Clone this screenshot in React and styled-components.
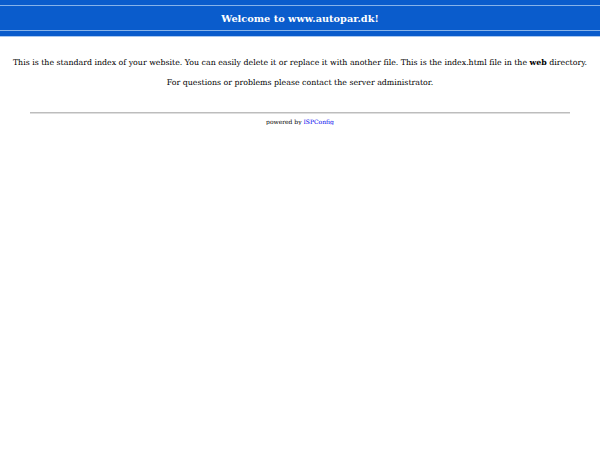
import React from "react";
import styled, { createGlobalStyle } from "styled-components";

const GlobalStyle = createGlobalStyle`
  html, body {
    margin: 0;
    padding: 0;
    background: #ffffff;
  }
  body {
    font-family: "DejaVu Serif", serif;
    color: #000000;
  }
`;

const Banner = styled.div`
  background: #0a5ccc;
  padding: 5px 0 5px;
  border-bottom: 1px solid #a9c8f0;
`;

const BannerInner = styled.div`
  border-top: 1px solid #86b3ea;
  border-bottom: 1px solid #86b3ea;
  height: 24px;
  display: flex;
  align-items: center;
  justify-content: center;
  color: #ffffff;
  font-weight: bold;
  font-size: 9.75px;
`;

const Content = styled.div`
  padding: 19px 0 0;
  text-align: center;
  font-size: 7.85px;
`;

const Paragraph = styled.p`
  margin: 0 0 ${(props) => props.gap || 0}px;
  line-height: 14px;
`;

const Rule = styled.hr`
  width: 90%;
  margin: 22px auto 4px;
  border: none;
  border-top: 1px solid #bdbdbd;
  border-bottom: 1px solid #dedede;
`;

const Footer = styled.div`
  font-size: 6px;
  text-align: center;
`;

const FooterLink = styled.a`
  color: #0000ee;
  text-decoration: underline;
  &:visited {
    color: #0000ee;
  }
`;

export default function App() {
  return (
    <>
      <GlobalStyle />
      <Banner>
        <BannerInner>Welcome to www.autopar.dk!</BannerInner>
      </Banner>
      <Content>
        <Paragraph gap={6}>
          This is the standard index of your website. You can easily delete it
          or replace it with another file. This is the index.html file in the{" "}
          <b>web</b> directory.
        </Paragraph>
        <Paragraph>For questions or problems please contact the server administrator.</Paragraph>
      </Content>
      <Rule />
      <Footer>
        powered by <FooterLink href="#">ISPConfig</FooterLink>
      </Footer>
    </>
  );
}
